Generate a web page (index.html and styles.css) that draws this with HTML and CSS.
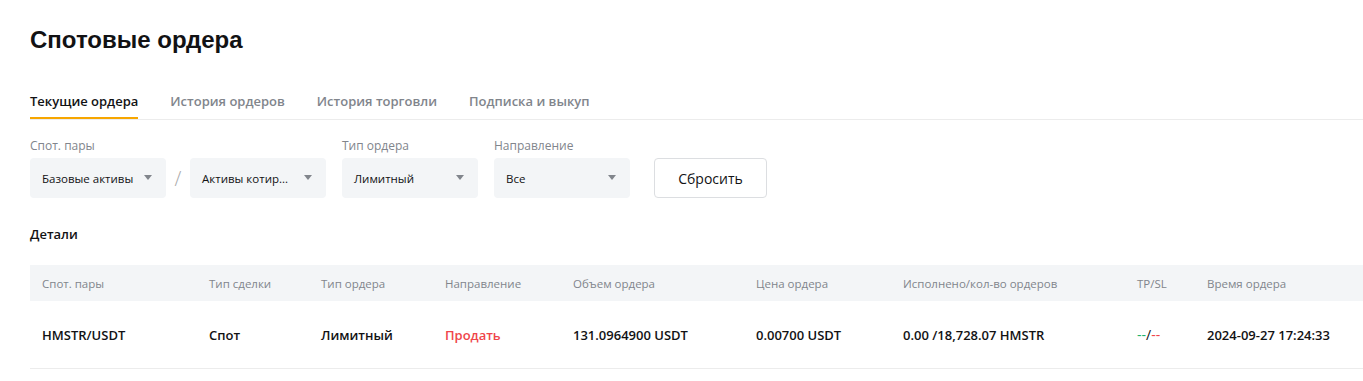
FILE: index.html
```html
<!DOCTYPE html>
<html lang="ru">
<head>
    <meta charset="UTF-8">
    <meta name="viewport" content="width=device-width, initial-scale=1.0">
    <title>Спотовые ордера</title>
    <link rel="stylesheet" href="styles.css">
</head>
<body>
    <div class="page">
        <h1 class="page-title">Спотовые ордера</h1>

        <div class="tabs">
            <div class="tab active">Текущие ордера</div>
            <div class="tab">История ордеров</div>
            <div class="tab">История торговли</div>
            <div class="tab">Подписка и выкуп</div>
        </div>

        <div class="filters">
            <div class="filter">
                <div class="filter-label">Спот. пары</div>
                <div class="pair">
                    <div class="select">Базовые активы <span class="caret"></span></div>
                    <span class="slash">/</span>
                    <div class="select">Активы котир... <span class="caret"></span></div>
                </div>
            </div>
            <div class="filter">
                <div class="filter-label">Тип ордера</div>
                <div class="select">Лимитный <span class="caret"></span></div>
            </div>
            <div class="filter">
                <div class="filter-label">Направление</div>
                <div class="select">Все <span class="caret"></span></div>
            </div>
            <button class="reset-button">Сбросить</button>
        </div>

        <div class="section-title">Детали</div>

        <div class="table">
            <div class="table-row table-head">
                <div>Спот. пары</div>
                <div>Тип сделки</div>
                <div>Тип ордера</div>
                <div>Направление</div>
                <div>Объем ордера</div>
                <div>Цена ордера</div>
                <div>Исполнено/кол-во ордеров</div>
                <div>TP/SL</div>
                <div>Время ордера</div>
            </div>
            <div class="table-row table-body">
                <div>HMSTR/USDT</div>
                <div>Спот</div>
                <div>Лимитный</div>
                <div class="sell">Продать</div>
                <div>131.0964900 USDT</div>
                <div>0.00700 USDT</div>
                <div>0.00 /18,728.07 HMSTR</div>
                <div class="tpsl"><span class="tp">--</span>/<span class="sl">--</span></div>
                <div>2024-09-27 17:24:33</div>
            </div>
        </div>
    </div>
</body>
</html>
```

FILE: styles.css
```css
body {
    margin: 0;
    padding: 0;
    background: #fff;
    color: #121214;
    font-family: "Open Sans", Arial, sans-serif;
    overflow: hidden;
}
.page {
    padding: 24px 0 0 30px;
}
.page-title {
    margin: 0;
    font-family: "Liberation Sans", Arial, sans-serif;
    font-size: 24px;
    font-weight: bold;
    line-height: 32px;
}
.tabs {
    display: flex;
    gap: 32px;
    margin-top: 35px;
    border-bottom: 1px solid #ececec;
}
.tab {
    font-size: 13px;
    font-weight: 600;
    line-height: 20px;
    color: #81858c;
    padding-bottom: 6px;
    border-bottom: 2px solid transparent;
}
.tab.active {
    color: #121214;
    border-bottom-color: #f7a600;
}
.filters {
    display: flex;
    align-items: flex-end;
    gap: 16px;
    margin-top: 18px;
}
.filter-label {
    font-size: 12px;
    line-height: 16px;
    color: #81858c;
    margin-bottom: 4px;
}
.pair {
    display: flex;
    align-items: center;
}
.slash {
    width: 24px;
    text-align: center;
    font-size: 20px;
    color: #aaa;
    font-weight: 300;
}
.select {
    box-sizing: border-box;
    width: 136px;
    height: 40px;
    padding: 0 12px;
    display: flex;
    align-items: center;
    justify-content: space-between;
    background: #f3f5f7;
    border-radius: 4px;
    font-size: 11.5px;
    font-weight: 500;
}
.caret {
    width: 0;
    height: 0;
    border-left: 4px solid transparent;
    border-right: 4px solid transparent;
    border-top: 5px solid #81858c;
    margin-top: -2px;
    margin-right: 2px;
}
.reset-button {
    box-sizing: border-box;
    width: 113px;
    height: 40px;
    margin-left: 8px;
    background: #fff;
    border: 1px solid #dcdee1;
    border-radius: 4px;
    font-family: inherit;
    font-size: 14px;
    font-weight: 500;
    color: #121214;
}
.section-title {
    margin-top: 26px;
    font-size: 13px;
    font-weight: 600;
    line-height: 20px;
}
.table {
    margin-top: 21px;
    width: 1340px;
}
.table-row {
    display: grid;
    grid-template-columns: 167px 112px 124px 128px 183px 147px 234px 70px 1fr;
    align-items: center;
    padding-left: 12px;
}
.table-head {
    height: 36px;
    background: #f3f5f7;
    font-size: 11.5px;
    color: #81858c;
}
.table-body {
    height: 67px;
    border-bottom: 1px solid #ececec;
    font-size: 13px;
    font-weight: 600;
}
.sell {
    color: #ef454a;
}
.tpsl {
    font-size: 14px;
    font-weight: 400;
}
.tp {
    color: #20b26c;
}
.sl {
    color: #ef454a;
}
```
